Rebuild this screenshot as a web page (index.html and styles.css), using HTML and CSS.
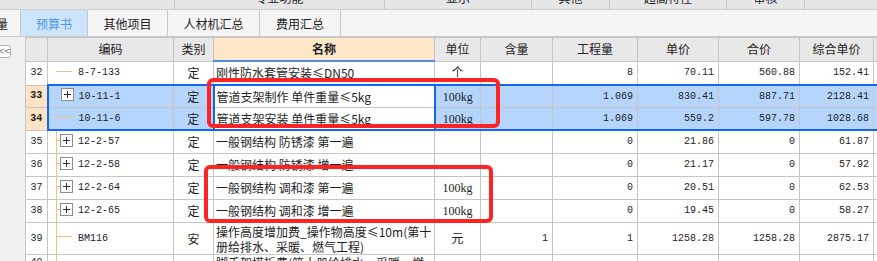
FILE: index.html
```html
<!DOCTYPE html>
<html lang="zh-CN">
<head>
    <meta charset="UTF-8">
    <title>预算书</title>
    <link rel="stylesheet" href="styles.css">
</head>
<body>
    <div class="ribbon">
        <div class="rb1"></div>
        <div class="rb2"><span>专业功能</span></div>
        <div class="rb3"><span>显示</span></div>
        <div class="rb4"><span>其他</span></div>
        <div class="rb5"><span>超高特性</span></div>
        <div class="rb6"><span>审核</span></div>
        <div class="rb7"></div>
    </div>
    <div class="tabs">
        <div class="tab tab0"><span>工程量</span></div>
        <div class="tab tab1 active">预算书</div>
        <div class="tab tab2">其他项目</div>
        <div class="tab tab3">人材机汇总</div>
        <div class="tab tab4">费用汇总</div>
    </div>
    <div class="main">
        <div class="side">
            <div class="fold">&lt;&lt;</div>
        </div>
        <div class="sheet">
            <table>
                <colgroup>
                    <col class="c-no"><col class="c-code"><col class="c-kind"><col class="c-name"><col class="c-unit">
                    <col class="c-qty"><col class="c-amt"><col class="c-price"><col class="c-sum"><col class="c-total"><col class="c-more">
                </colgroup>
                <thead>
                    <tr>
                        <th></th><th>编码</th><th>类别</th><th class="hot">名称</th><th>单位</th>
                        <th>含量</th><th>工程量</th><th>单价</th><th>合价</th><th>综合单价</th><th></th>
                    </tr>
                </thead>
                <tbody>
                    <tr>
                        <td class="no">32</td><td class="code"><span class="tw leaf"></span>8-7-133</td><td class="kind">定</td>
                        <td class="name">刚性防水套管安装≤DN50</td><td class="unit">个</td>
                        <td class="n"></td><td class="n">8</td><td class="n">70.11</td><td class="n">560.88</td><td class="n">152.41</td><td></td>
                    </tr>
                    <tr class="sel top">
                        <td class="no">33</td><td class="code"><span class="tw"><span class="bx"></span></span>10-11-1</td><td class="kind">定</td>
                        <td class="name">管道支架制作 单件重量≤5kg</td><td class="unit">100kg</td>
                        <td class="n"></td><td class="n">1.069</td><td class="n">830.41</td><td class="n">887.71</td><td class="n">2128.41</td><td></td>
                    </tr>
                    <tr class="sel bot">
                        <td class="no">34</td><td class="code"><span class="tw leaf"></span>10-11-6</td><td class="kind">定</td>
                        <td class="name">管道支架安装 单件重量≤5kg</td><td class="unit">100kg</td>
                        <td class="n"></td><td class="n">1.069</td><td class="n">559.2</td><td class="n">597.78</td><td class="n">1028.68</td><td></td>
                    </tr>
                    <tr>
                        <td class="no">35</td><td class="code stem"><span class="tw node"><span class="bx"></span></span>12-2-57</td><td class="kind">定</td>
                        <td class="name">一般钢结构 防锈漆 第一遍</td><td class="unit"></td>
                        <td class="n"></td><td class="n">0</td><td class="n">21.86</td><td class="n">0</td><td class="n">61.87</td><td></td>
                    </tr>
                    <tr>
                        <td class="no">36</td><td class="code stem"><span class="tw node"><span class="bx"></span></span>12-2-58</td><td class="kind">定</td>
                        <td class="name">一般钢结构 防锈漆 增一遍</td><td class="unit"></td>
                        <td class="n"></td><td class="n">0</td><td class="n">21.17</td><td class="n">0</td><td class="n">57.92</td><td></td>
                    </tr>
                    <tr>
                        <td class="no">37</td><td class="code stem"><span class="tw node"><span class="bx"></span></span>12-2-64</td><td class="kind">定</td>
                        <td class="name">一般钢结构 调和漆 第一遍</td><td class="unit">100kg</td>
                        <td class="n"></td><td class="n">0</td><td class="n">20.51</td><td class="n">0</td><td class="n">62.53</td><td></td>
                    </tr>
                    <tr>
                        <td class="no">38</td><td class="code stem"><span class="tw node"><span class="bx"></span></span>12-2-65</td><td class="kind">定</td>
                        <td class="name">一般钢结构 调和漆 增一遍</td><td class="unit">100kg</td>
                        <td class="n"></td><td class="n">0</td><td class="n">19.45</td><td class="n">0</td><td class="n">58.27</td><td></td>
                    </tr>
                    <tr class="tall">
                        <td class="no">39</td><td class="code stem"><span class="tw leaf"></span>BM116</td><td class="kind">安</td>
                        <td class="name wrap">操作高度增加费_操作物高度≤10m(第十<br>册给排水、采暖、燃气工程)</td><td class="unit">元</td>
                        <td class="n">1</td><td class="n">1</td><td class="n">1258.28</td><td class="n">1258.28</td><td class="n">2875.17</td><td></td>
                    </tr>
                    <tr class="tall last">
                        <td class="no">40</td><td class="code stem"></td><td class="kind"></td>
                        <td class="name">脚手架搭拆费(第十册给排水、采暖、燃</td><td class="unit"></td>
                        <td class="n"></td><td class="n"></td><td class="n"></td><td class="n"></td><td class="n"></td><td></td>
                    </tr>
                </tbody>
            </table>
            <div class="mark m1"></div>
            <div class="mark m2"></div>
        </div>
    </div>
</body>
</html>
```

FILE: styles.css
```css
html, body {
    margin: 0;
    padding: 0;
}
body {
    width: 877px;
    height: 261px;
    overflow: hidden;
    background-color: #f0f0f0;
    font-family: "Noto Sans CJK SC", sans-serif;
    font-size: 12px;
    color: #1e1e1e;
}

/* 顶部工具栏（被截掉一半） */
.ribbon {
    display: flex;
    height: 9px;
    background-color: #e6e6e6;
    border-bottom: 1px solid #d0d0d0;
    overflow: hidden;
}
.ribbon div {
    box-sizing: border-box;
    border-right: 1px solid #c8c8c8;
    text-align: center;
    line-height: 12px;
    overflow: hidden;
}
.ribbon span {
    display: block;
    margin-top: -8px;
}
.rb1 { width: 175px; }
.rb2 { width: 210px; }
.rb3 { width: 147px; }
.rb4 { width: 78px; }
.rb5 { width: 117px; }
.rb6 { width: 78px; }
.rb7 { flex: 1; border-right: none !important; }

/* 标签页 */
.tabs {
    display: flex;
    height: 26px;
    background-color: #f5f5f5;
    border-bottom: 1px solid #c8c8c8;
}
.tab {
    box-sizing: border-box;
    display: flex;
    align-items: center;
    justify-content: center;
    border-right: 1px solid #c8c8c8;
    white-space: nowrap;
    overflow: hidden;
    color: #222;
}
.tab0 { width: 21px; justify-content: flex-start; }
.tab0 span { margin-left: -28px; }
.tab1 { width: 67px; }
.tab2 { width: 80px; }
.tab3 { width: 92px; }
.tab4 { width: 81px; }
.tab.active {
    background-color: #cde5fb;
    color: #4f95e6;
}

.main {
    display: flex;
}
.side {
    width: 25px;
    flex: none;
    box-sizing: border-box;
    padding-top: 8px;
}
.fold {
    width: 14px;
    height: 13px;
    box-sizing: border-box;
    margin-left: -3px;
    border: 1px solid #b4b4b4;
    border-radius: 3px;
    background-color: #fafafa;
    color: #777;
    font-family: "DejaVu Sans", sans-serif;
    font-size: 8px;
    line-height: 11px;
    text-align: right;
    padding-right: 1px;
    letter-spacing: -1px;
}
.sheet {
    position: relative;
    flex: 1;
    overflow: hidden;
    height: 224px;
}

/* 表格 */
table {
    border-collapse: collapse;
    table-layout: fixed;
    width: 888px;
    background-color: #fff;
}
.c-no { width: 22px; }
.c-code { width: 126px; }
.c-kind { width: 40px; }
.c-name { width: 221px; }
.c-unit { width: 46px; }
.c-qty { width: 72px; }
.c-amt { width: 85px; }
.c-price { width: 81px; }
.c-sum { width: 81px; }
.c-total { width: 74px; }
.c-more { width: 60px; }

th, td {
    border: 1px solid #c6c6c6;
    padding: 0 2px;
    white-space: nowrap;
    overflow: hidden;
    line-height: 14px;
}
th {
    height: 22px;
    background-color: #e8e8e8;
    font-weight: normal;
    color: #222;
}
th.hot {
    background-color: #fee6c9;
    font-weight: bold;
    border-bottom: 2px solid #4d8fe0;
}
td {
    height: 22px;
    background-color: #fff;
}
tr.tall td {
    height: 31px;
}
tr.last td {
    vertical-align: top;
    padding-top: 1px;
}

td.no {
    text-align: center;
    padding: 0;
    font-family: "Liberation Mono", monospace;
    font-size: 10px;
}
td.code {
    padding-left: 0;
    font-family: "Liberation Mono", monospace;
    font-size: 10px;
}
td.kind, td.unit {
    text-align: center;
}
td.unit {
    font-family: "Liberation Serif", "Noto Sans CJK SC", serif;
    font-size: 12px;
}
td.name {
    padding-left: 2px;
}
td.wrap {
    white-space: normal;
    line-height: 15px;
}
td.n {
    text-align: right;
    padding-right: 4px;
    font-family: "Liberation Mono", monospace;
    font-size: 10px;
}

/* 树形结构线 */
.tw {
    display: inline-block;
    width: 30px;
    height: 13px;
    vertical-align: middle;
    margin-top: -2px;
}
.leaf {
    background: linear-gradient(#f4c27e, #f4c27e) 8px 6px / 16px 1px no-repeat;
}
.node {
    background: linear-gradient(#f4c27e, #f4c27e) 8px 6px / 4px 1px no-repeat;
}
.bx {
    display: block;
    width: 13px;
    height: 13px;
    box-sizing: border-box;
    margin-left: 12px;
    border: 1px solid #8c8c8c;
    background:
        linear-gradient(#333, #333) center / 7px 1px no-repeat,
        linear-gradient(#333, #333) center / 1px 7px no-repeat,
        #fff;
}
td.stem {
    background-image: linear-gradient(#f4c27e, #f4c27e);
    background-size: 1px 100%;
    background-position: 8px 0;
    background-repeat: no-repeat;
}

/* 选中行 */
tr.sel td {
    height: 21px;
    background-color: #b6d5fc;
}
tr.sel td.no {
    background-color: #fde3c4;
    font-weight: bold;
}
tr.top td {
    border-top: 2px solid #1466f0;
}
tr.bot td {
    border-bottom: 2px solid #1466f0;
}
tr.top td.no {
    border-top: 1px solid #c6c6c6;
}
tr.bot td.no {
    border-bottom: 1px solid #c6c6c6;
}
tr.sel td.code {
    border-left: 2px solid #1466f0;
}
tr.sel td.name {
    background-color: #fff;
    border-left: 2px solid #1466f0;
    border-right: 2px solid #1466f0;
}

/* 红色标注框 */
.mark {
    position: absolute;
    box-sizing: border-box;
    border: 4px solid #ff2424;
    border-radius: 6px;
}
.m1 {
    left: 182px;
    top: 41px;
    width: 293px;
    height: 50px;
}
.m2 {
    left: 179px;
    top: 128px;
    width: 289px;
    height: 58px;
}
```
